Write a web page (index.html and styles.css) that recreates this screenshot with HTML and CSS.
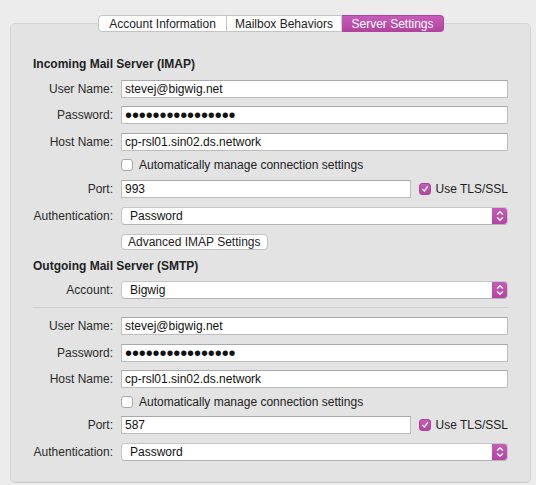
FILE: index.html
```html
<!DOCTYPE html>
<html>
<head>
<meta charset="utf-8">
<link rel="stylesheet" href="styles.css">
</head>
<body>
<div class="window">
  <div class="tabs">
    <div class="tab">Account Information</div>
    <div class="tab">Mailbox Behaviors</div>
    <div class="tab active">Server Settings</div>
  </div>
  <div class="panel">
    <div class="heading">Incoming Mail Server (IMAP)</div>
    <div class="row r-user1"><span class="label">User Name:</span><div class="input">stevej@bigwig.net</div></div>
    <div class="row r-pw"><span class="label">Password:</span><div class="input secret">••••••••••••••••</div></div>
    <div class="row r-host"><span class="label">Host Name:</span><div class="input">cp-rsl01.sin02.ds.network</div></div>
    <div class="row r-check"><span class="label"></span><div class="check-line"><span class="checkbox"></span><span>Automatically manage connection settings</span></div></div>
    <div class="row r-port"><span class="label">Port:</span>
      <div class="port-line"><div class="input grow">993</div>
        <div class="check-line tls"><span class="checkbox checked"><svg viewBox="0 0 12 12" width="12" height="12"><path d="M3.2 6.4 L5.2 8.6 L8.9 3.3" fill="none" stroke="#fff" stroke-width="1.6" stroke-linecap="round" stroke-linejoin="round"/></svg></span><span>Use TLS/SSL</span></div>
      </div>
    </div>
    <div class="row r-auth"><span class="label">Authentication:</span><div class="select"><span>Password</span><span class="stepper"><svg viewBox="0 0 16 18" width="16" height="18"><path d="M5.5 7.2 L8 4.8 L10.5 7.2 M5.5 10.8 L8 13.2 L10.5 10.8" fill="none" stroke="#fff" stroke-width="1.4" stroke-linecap="round" stroke-linejoin="round"/></svg></span></div></div>
    <div class="row r-btn"><span class="label"></span><div><span class="button">Advanced IMAP Settings</span></div></div>
    <div class="heading h2">Outgoing Mail Server (SMTP)</div>
    <div class="row r-account"><span class="label">Account:</span><div class="select"><span>Bigwig</span><span class="stepper"><svg viewBox="0 0 16 18" width="16" height="18"><path d="M5.5 7.2 L8 4.8 L10.5 7.2 M5.5 10.8 L8 13.2 L10.5 10.8" fill="none" stroke="#fff" stroke-width="1.4" stroke-linecap="round" stroke-linejoin="round"/></svg></span></div></div>
    <div class="separator"></div>
    <div class="row r-user2"><span class="label">User Name:</span><div class="input">stevej@bigwig.net</div></div>
    <div class="row r-pw2"><span class="label">Password:</span><div class="input secret">••••••••••••••••</div></div>
    <div class="row r-host2"><span class="label">Host Name:</span><div class="input">cp-rsl01.sin02.ds.network</div></div>
    <div class="row r-check2"><span class="label"></span><div class="check-line"><span class="checkbox"></span><span>Automatically manage connection settings</span></div></div>
    <div class="row r-port2"><span class="label">Port:</span>
      <div class="port-line"><div class="input grow">587</div>
        <div class="check-line tls"><span class="checkbox checked"><svg viewBox="0 0 12 12" width="12" height="12"><path d="M3.2 6.4 L5.2 8.6 L8.9 3.3" fill="none" stroke="#fff" stroke-width="1.6" stroke-linecap="round" stroke-linejoin="round"/></svg></span><span>Use TLS/SSL</span></div>
      </div>
    </div>
    <div class="row r-auth2"><span class="label">Authentication:</span><div class="select"><span>Password</span><span class="stepper"><svg viewBox="0 0 16 18" width="16" height="18"><path d="M5.5 7.2 L8 4.8 L10.5 7.2 M5.5 10.8 L8 13.2 L10.5 10.8" fill="none" stroke="#fff" stroke-width="1.4" stroke-linecap="round" stroke-linejoin="round"/></svg></span></div></div>
  </div>
</div>
</body>
</html>
```

FILE: styles.css
```css
* { box-sizing: border-box; }
html, body {
  margin: 0;
  padding: 0;
  background: #ececec;
  font-family: "Liberation Sans", Arial, sans-serif;
  font-size: 12px;
  color: #262626;
}
.window {
  width: 521px;
  margin-left: 10px;
  padding-top: 15px;
}
.tabs {
  display: flex;
  justify-content: center;
  position: relative;
  z-index: 2;
  height: 17px;
  margin-bottom: -9px;
  padding-left: 1px;
}
.tab {
  height: 17px;
  line-height: 16px;
  background: #fff;
  border: 1px solid #c4c4c4;
  border-left: none;
  color: #222;
  white-space: nowrap;
  text-align: center;
}
.tab:first-child {
  border-left: 1px solid #c4c4c4;
  border-radius: 4px 0 0 4px;
  width: 129px;
}
.tab:nth-child(2) { width: 115px; border-right-color: #d0d0d0; }
.tab.active {
  width: 102px;
  background: linear-gradient(#c65cba, #b2449f);
  border-color: #b2449f;
  color: #fff;
  border-radius: 0 4px 4px 0;
}
.panel {
  position: relative;
  background: #e3e3e3;
  border: 1px solid #d6d6d6;
  border-bottom-color: #c9c9c9;
  border-radius: 5px;
  padding: 32px 22px 21px 22px;
  display: flex;
  flex-direction: column;
}
.heading {
  font-weight: bold;
  height: 16px;
  line-height: 16px;
  color: #222;
}
.row {
  display: grid;
  grid-template-columns: 80px 1fr;
  column-gap: 8px;
  align-items: center;
  height: 18px;
  margin-top: 8px;
}
.r-host, .r-auth, .r-btn, .r-user2, .r-pw2, .r-auth2 { margin-top: 9px; }
.r-check, .r-check2 { height: 14px; margin-top: 7px; }
.r-port2 { margin-top: 7px; }
.r-btn { height: 16px; }
.h2 { margin-top: 8px; }
.r-account { margin-top: 7px; }
.label {
  text-align: right;
  white-space: nowrap;
  color: #2a2a2a;
  line-height: 18px;
}
.input {
  height: 18px;
  background: #fff;
  border: 1px solid #bdbdbd;
  border-top-color: #a9a9a9;
  padding: 0 3px;
  line-height: 17px;
  color: #111;
  white-space: nowrap;
}
.secret {
  font-size: 20px;
  letter-spacing: -0.1px;
  line-height: 16px;
  padding-left: 3px;
}
.port-line {
  display: flex;
  align-items: center;
}
.grow { flex: 1; }
.check-line {
  display: flex;
  align-items: center;
  gap: 6px;
  white-space: nowrap;
  color: #222;
}
.tls { margin-left: 8px; gap: 5px; }
.checkbox {
  width: 12px;
  height: 12px;
  background: #fff;
  border: 1px solid #a9a9a9;
  border-radius: 3px;
  display: inline-flex;
  align-items: center;
  justify-content: center;
}
.checkbox.checked {
  background: linear-gradient(#c65cba, #b2449f);
  border-color: #b2449f;
}
.checkbox svg { display: block; }
.select {
  height: 18px;
  background: #fff;
  border: 1px solid #c6c6c6;
  border-bottom-color: #b4b4b4;
  border-radius: 4px;
  display: flex;
  align-items: center;
  justify-content: space-between;
  padding-left: 8px;
  color: #111;
  overflow: hidden;
}
.stepper {
  width: 16px;
  height: 18px;
  margin-right: -1px;
  background: linear-gradient(#c65cba, #b2449f);
  display: block;
}
.stepper svg { display: block; }
.button {
  display: inline-block;
  height: 16px;
  line-height: 15px;
  padding: 0 6px;
  background: #fff;
  border: 1px solid #c2c2c2;
  border-radius: 4px;
  color: #222;
}
.separator {
  height: 1px;
  background: #cfcfcf;
  margin-top: 8px;
}
```
